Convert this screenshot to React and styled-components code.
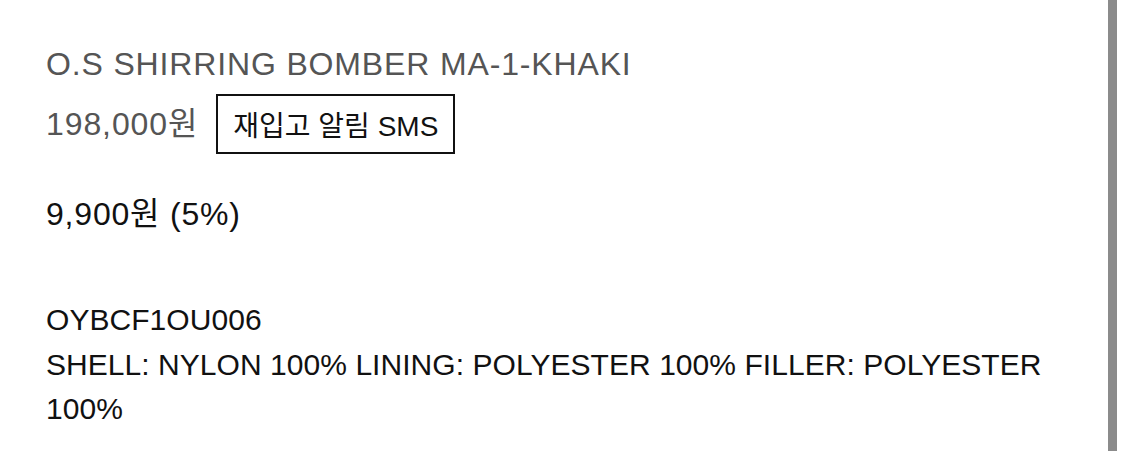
import React from "react";
import styled, { createGlobalStyle } from "styled-components";

const Global = createGlobalStyle`
  html, body { margin: 0; padding: 0; background: #fff; }
  body { font-family: "Liberation Sans", "Noto Sans CJK KR", Arial, sans-serif; }
`;

const Page = styled.div`
  display: flex;
  width: 1125px;
  height: 451px;
  overflow: hidden;
  background: #fff;
`;

const Content = styled.div`
  flex: 1;
  display: flex;
  flex-direction: column;
  padding: 44px 0 0 46px;
`;

const Title = styled.h1`
  margin: 0;
  font-size: 32px;
  font-weight: 400;
  line-height: 40px;
  color: #555;
  letter-spacing: 0.85px;
`;

const PriceRow = styled.div`
  display: flex;
  align-items: center;
  gap: 18px;
  margin-top: 10px;
`;

const Price = styled.span`
  font-size: 32px;
  color: #555;
  line-height: 40px;
  letter-spacing: 0.9px;
`;

const NotifyButton = styled.button`
  box-sizing: border-box;
  width: 239px;
  height: 60px;
  border: 2px solid #111;
  background: #fff;
  font-family: inherit;
  font-size: 28px;
  color: #111;
  padding: 0;
  display: flex;
  align-items: center;
  justify-content: center;
`;

const Point = styled.div`
  margin-top: 40px;
  font-size: 32px;
  line-height: 40px;
  color: #111;
  letter-spacing: 0.8px;
`;

const Details = styled.div`
  margin-top: 64px;
  font-size: 30px;
  line-height: 44.5px;
  color: #111;
  max-width: 1010px;
  letter-spacing: 0.05px;
`;

const ScrollTrack = styled.div`
  width: 9px;
  margin-right: 8px;
  background: #8b8b8b;
  align-self: stretch;
`;

export default function App() {
  return (
    <>
      <Global />
      <Page>
        <Content>
          <Title>O.S SHIRRING BOMBER MA-1-KHAKI</Title>
          <PriceRow>
            <Price>198,000원</Price>
            <NotifyButton>재입고 알림 SMS</NotifyButton>
          </PriceRow>
          <Point>9,900원 (5%)</Point>
          <Details>
            <div>OYBCF1OU006</div>
            <div>SHELL: NYLON 100% LINING: POLYESTER 100% FILLER: POLYESTER 100%</div>
          </Details>
        </Content>
        <ScrollTrack />
      </Page>
    </>
  );
}
